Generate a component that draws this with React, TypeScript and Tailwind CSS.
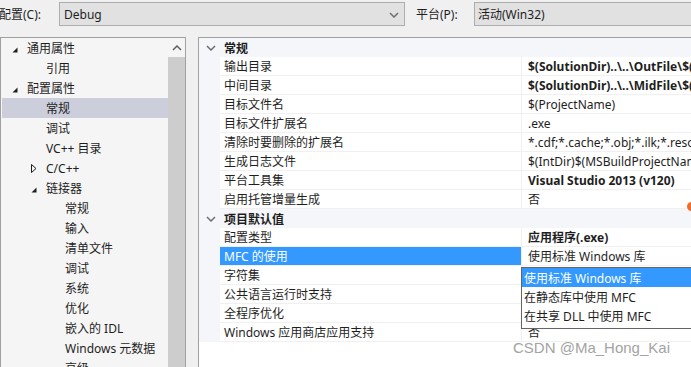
import React from "react";

type TreeItem = { label: string; level: 0 | 1 | 2; icon?: "open" | "closed"; selected?: boolean };

const tree: TreeItem[] = [
  { label: "通用属性", level: 0, icon: "open" },
  { label: "引用", level: 1 },
  { label: "配置属性", level: 0, icon: "open" },
  { label: "常规", level: 1, selected: true },
  { label: "调试", level: 1 },
  { label: "VC++ 目录", level: 1 },
  { label: "C/C++", level: 1, icon: "closed" },
  { label: "链接器", level: 1, icon: "open" },
  { label: "常规", level: 2 },
  { label: "输入", level: 2 },
  { label: "清单文件", level: 2 },
  { label: "调试", level: 2 },
  { label: "系统", level: 2 },
  { label: "优化", level: 2 },
  { label: "嵌入的 IDL", level: 2 },
  { label: "Windows 元数据", level: 2 },
  { label: "高级", level: 2 },
];

const indent = ["pl-[10px]", "pl-[29px]", "pl-[48px]"];

type Prop = { name: string; value: string; bold?: boolean; selected?: boolean };

// values of rows covered by the open list are left blank
const sections: { title: string; props: Prop[] }[] = [
  {
    title: "常规",
    props: [
      { name: "输出目录", value: "$(SolutionDir)..\\..\\OutFile\\$(Configuration)\\", bold: true },
      { name: "中间目录", value: "$(SolutionDir)..\\..\\MidFile\\$(Configuration)\\", bold: true },
      { name: "目标文件名", value: "$(ProjectName)" },
      { name: "目标文件扩展名", value: ".exe" },
      { name: "清除时要删除的扩展名", value: "*.cdf;*.cache;*.obj;*.ilk;*.resources;*.tlb;*.tli" },
      { name: "生成日志文件", value: "$(IntDir)$(MSBuildProjectName).log" },
      { name: "平台工具集", value: "Visual Studio 2013 (v120)", bold: true },
      { name: "启用托管增量生成", value: "否" },
    ],
  },
  {
    title: "项目默认值",
    props: [
      { name: "配置类型", value: "应用程序(.exe)", bold: true },
      { name: "MFC 的使用", value: "使用标准 Windows 库", selected: true },
      { name: "字符集", value: "" },
      { name: "公共语言运行时支持", value: "" },
      { name: "全程序优化", value: "" },
      { name: "Windows 应用商店应用支持", value: "否" },
    ],
  },
];

const options = ["使用标准 Windows 库", "在静态库中使用 MFC", "在共享 DLL 中使用 MFC"];

function Expanded() {
  return (
    <svg width="6" height="6" viewBox="0 0 6 6" className="ml-[1px] mt-[1px]">
      <polygon points="5.5,0.5 5.5,5.5 0.5,5.5" fill="#1e1e1e" />
    </svg>
  );
}

function Collapsed() {
  return (
    <svg width="6" height="9" viewBox="0 0 6 9" className="ml-[1px] mt-[-1px]">
      <polygon points="0.5,0.5 5,4.5 0.5,8.5" fill="none" stroke="#1e1e1e" strokeWidth="1" />
    </svg>
  );
}

function Chevron({ up }: { up?: boolean }) {
  return (
    <svg width="10" height="6" viewBox="0 0 10 6">
      <polyline
        points={up ? "1,5 5,1 9,5" : "1,1 5,5 9,1"}
        fill="none"
        stroke={up ? "#606060" : "#6e6e6e"}
        strokeWidth="1.5"
      />
    </svg>
  );
}

export default function App() {
  return (
    <div
      className="relative h-[367px] w-[691px] overflow-hidden bg-[#f0f0f0] text-[12px] text-[#1e1e1e]"
      style={{ fontFamily: '"Noto Sans", "Noto Sans CJK SC", sans-serif' }}
    >
      {/* toolbar */}
      <div className="flex h-[37px] items-start pt-[2px]">
        <span className="ml-[-1px] flex h-[24px] w-[60px] shrink-0 items-center pt-[2px]">配置(C):</span>
        <div className="flex h-[24px] w-[346px] shrink-0 items-center justify-between border border-[#adadad] bg-[#e1e1e1] pl-[4px] pr-[5px] pt-[2px]">
          <span>Debug</span>
          <Chevron />
        </div>
        <span className="ml-[11px] flex h-[24px] w-[58px] shrink-0 items-center pt-[2px]">平台(P):</span>
        <div className="flex h-[24px] flex-1 items-center border border-r-0 border-[#adadad] bg-[#e1e1e1] pl-[3px] pt-[2px]">
          活动(Win32)
        </div>
      </div>

      <div className="flex h-[330px]">
        {/* tree */}
        <div className="flex w-[186px] shrink-0 border border-b-0 border-[#a0a0a0] bg-[#f5f5f5]">
          <div className="w-[167px] shrink-0 overflow-hidden">
            {tree.map((item, i) => (
              <div
                key={i}
                className={`flex h-[20px] items-center whitespace-nowrap pt-[2px] ${indent[item.level]} ${
                  item.selected ? "ml-[1px] bg-[#cccedb] !pl-[28px]" : ""
                }`}
              >
                <span className="flex w-[16px] items-center">
                  {item.icon === "open" && <Expanded />}
                  {item.icon === "closed" && <Collapsed />}
                </span>
                <span>{item.label}</span>
              </div>
            ))}
          </div>
          <div className="flex w-[17px] shrink-0 flex-col">
            <div className="flex h-[19px] items-center justify-center">
              <Chevron up />
            </div>
            <div className="flex-1 bg-[#cdcdcd]" />
          </div>
        </div>

        <div className="w-[12px] shrink-0" />

        {/* property grid */}
        <div className="min-w-0 flex-1 border-l border-t border-[#a0a0a0] bg-white">
          {sections.map((section) => (
            <div key={section.title}>
              <div className="flex h-[19px] items-center bg-[#f4f6fa]">
                <span className="flex w-[21px] shrink-0 justify-center pl-[2px]">
                  <Chevron />
                </span>
                <span className="pl-[4px] pt-[3px] font-bold">{section.title}</span>
              </div>
              {section.props.map((p) => (
                <div key={p.name} className="flex h-[19px]">
                  <div className="w-[21px] shrink-0 bg-[#f4f6fa]" />
                  <div
                    className={`flex w-[301px] shrink-0 items-center border-b border-[#f0f0f0] pl-[4px] pt-[2px] ${
                      p.selected ? "border-[#3399ff] bg-[#3399ff] text-white" : ""
                    }`}
                  >
                    {p.name}
                  </div>
                  <div
                    className={`flex min-w-0 flex-1 items-center overflow-hidden whitespace-nowrap border-b border-l border-[#f0f0f0] pl-[6px] pt-[2px] ${
                      p.bold ? "font-bold" : ""
                    }`}
                  >
                    {p.value}
                  </div>
                </div>
              ))}
            </div>
          ))}
        </div>
      </div>

      {/* open dropdown list */}
      <div className="absolute left-[521px] top-[267px] h-[62px] w-[190px] border border-[#646464] bg-white">
        {options.map((o, i) => (
          <div
            key={o}
            className={`flex h-[19px] items-center whitespace-nowrap pl-[2px] pt-[2px] ${
              i === 0 ? "bg-[#3399ff] text-white" : ""
            }`}
          >
            {o}
          </div>
        ))}
      </div>

      {/* cursor mark */}
      <div className="absolute left-[687px] top-[202px] h-[9px] w-[6px] rounded-l-full bg-[#f26b2a]" />

      {/* watermark */}
      <div
        className="absolute left-[513px] top-[337px] text-[15px] text-[#a3a3a3]"
        style={{ fontFamily: '"Liberation Sans", sans-serif' }}
      >
        CSDN @Ma_Hong_Kai
      </div>
    </div>
  );
}
